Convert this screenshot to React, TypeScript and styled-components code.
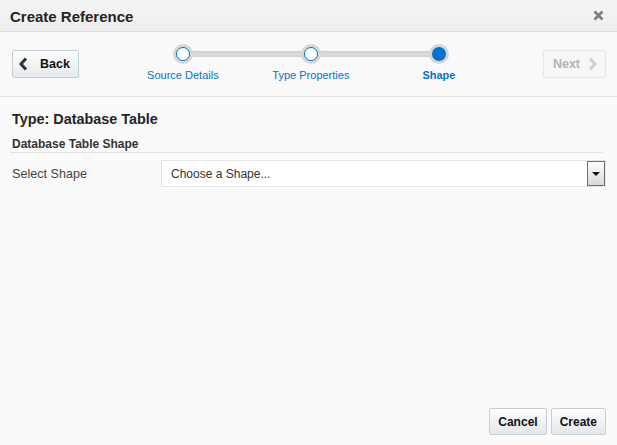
import React from 'react';
import styled, { createGlobalStyle } from 'styled-components';

const GlobalStyle = createGlobalStyle`
  html, body {
    margin: 0;
    padding: 0;
    background: #fafafa;
  }
  body {
    font-family: "Liberation Sans", Arial, sans-serif;
    color: #333;
  }
`;

const Dialog = styled.div`
  width: 617px;
  height: 445px;
  display: flex;
  flex-direction: column;
  background: #fafafa;
  box-sizing: border-box;
`;

const Header = styled.div`
  height: 31px;
  flex: none;
  display: flex;
  align-items: center;
  justify-content: space-between;
  padding: 0 12px 0 10px;
  background: linear-gradient(#f4f4f4, #efefef);
  border-bottom: 1px solid #d6dfe6;
`;

const Title = styled.h1`
  margin: 0;
  font-size: 15px;
  font-weight: bold;
  color: #252525;
  padding-top: 1px;
`;

const CloseButton = styled.button`
  border: none;
  background: none;
  padding: 0;
  width: 14px;
  height: 14px;
  display: flex;
  align-items: center;
  justify-content: center;
  cursor: pointer;
`;

const Train = styled.div`
  height: 64px;
  flex: none;
  display: flex;
  align-items: flex-start;
  padding: 0 11px 0 12px;
  border-bottom: 1px solid #dde3e8;
  background: #f9f9f9;
`;

const NavButton = styled.button<{ $disabled?: boolean }>`
  margin-top: 18px;
  height: 28px;
  display: flex;
  align-items: center;
  gap: ${p => (p.$disabled ? '8px' : '12px')};
  padding: ${p => (p.$disabled ? '0 8px 0 9px' : '0 8px 0 6px')};
  border: 1px solid ${p => (p.$disabled ? '#e3e7ea' : '#c4ced7')};
  border-radius: 2px;
  background: ${p =>
    p.$disabled ? '#f6f7f8' : 'linear-gradient(#fdfdfd, #e6eaec)'};
  font-family: inherit;
  font-size: 12.5px;
  font-weight: bold;
  color: ${p => (p.$disabled ? '#b3b3b3' : '#111')};
  cursor: ${p => (p.$disabled ? 'default' : 'pointer')};
  box-sizing: border-box;
`;

const Stepper = styled.div`
  flex: 1;
  display: flex;
  justify-content: center;
  padding-top: 12px;
`;

const Step = styled.div<{ $first?: boolean; $last?: boolean }>`
  width: 128px;
  display: flex;
  flex-direction: column;
  align-items: center;
  position: relative;

  &::before,
  &::after {
    content: '';
    position: absolute;
    top: 7px;
    height: 6px;
    width: 50%;
    background: linear-gradient(#cfcfcf, #dcdcdc 50%, #d2d2d2);
  }
  &::before {
    left: 0;
    display: ${p => (p.$first ? 'none' : 'block')};
  }
  &::after {
    right: 0;
    display: ${p => (p.$last ? 'none' : 'block')};
  }
`;

const Dot = styled.div<{ $current?: boolean }>`
  position: relative;
  z-index: 1;
  width: 20px;
  height: 20px;
  border-radius: 50%;
  background: #d6d6d6;
  display: flex;
  align-items: center;
  justify-content: center;

  &::after {
    content: '';
    width: ${p => (p.$current ? '14px' : '12px')};
    height: ${p => (p.$current ? '14px' : '12px')};
    border-radius: 50%;
    box-sizing: content-box;
    background: ${p => (p.$current ? '#0572ce' : '#fff')};
    border: ${p => (p.$current ? 'none' : '1.5px solid #0572ce')};
  }
`;

const StepLabel = styled.span<{ $current?: boolean }>`
  margin-top: 5px;
  font-size: 11px;
  line-height: 13px;
  color: #0572ce;
  font-weight: ${p => (p.$current ? 'bold' : 'normal')};
  white-space: nowrap;
`;

const Body = styled.div`
  flex: 1;
  padding: 13px 11px 0 12px;
  display: flex;
  flex-direction: column;
`;

const TypeHeading = styled.h2`
  margin: 0;
  font-size: 14.4px;
  font-weight: bold;
  color: #252525;
  line-height: 18px;
`;

const SectionHeading = styled.h3`
  margin: 9px 3px 0 -2px;
  padding: 0 0 1px 2px;
  font-size: 12px;
  font-weight: bold;
  color: #333;
  line-height: 14px;
  border-bottom: 1px solid #e2e2e2;
`;

const FormRow = styled.div`
  display: flex;
  align-items: center;
  margin-top: 7px;
`;

const FieldLabel = styled.label`
  width: 149px;
  font-size: 12.6px;
  color: #444;
`;

const SelectBox = styled.div`
  flex: 1;
  height: 27px;
  display: flex;
  align-items: center;
  justify-content: space-between;
  border: 1px solid #dfe4e7;
  background: #fff;
  box-sizing: border-box;
  padding: 0 0 0 9px;
  font-size: 12px;
  color: #333;
`;

const ArrowButton = styled.div`
  width: 18px;
  height: 25px;
  box-sizing: border-box;
  border: 1px solid #6e6e6e;
  background: linear-gradient(#ffffff, #d8d8d8);
  display: flex;
  align-items: center;
  justify-content: center;
`;

const Triangle = styled.span`
  width: 0;
  height: 0;
  border-left: 4px solid transparent;
  border-right: 4px solid transparent;
  border-top: 4px solid #111;
`;

const Footer = styled.div`
  flex: none;
  display: flex;
  justify-content: flex-end;
  gap: 4px;
  padding: 0 11px 10px 0;
`;

const FooterButton = styled.button`
  height: 27px;
  margin: 0;
  padding: 0 8px;
  border: 1px solid #c4ced7;
  border-radius: 2px;
  background: linear-gradient(#fdfdfd, #e4e8eb);
  font-family: inherit;
  font-size: 12px;
  font-weight: bold;
  color: #111;
  cursor: pointer;
`;

const Chevron: React.FC<{ dir: 'left' | 'right'; color: string }> = ({ dir, color }) => (
  <svg width="9" height="14" viewBox="0 0 9 14">
    <path
      d={dir === 'left' ? 'M7 1.5 L2 7 L7 12.5' : 'M2 1.5 L7 7 L2 12.5'}
      fill="none"
      stroke={color}
      strokeWidth="3"
    />
  </svg>
);

const steps = [
  { label: 'Source Details' },
  { label: 'Type Properties' },
  { label: 'Shape', current: true },
];

export default function App() {
  return (
    <>
      <GlobalStyle />
      <Dialog>
        <Header>
          <Title>Create Reference</Title>
          <CloseButton aria-label="Close">
            <svg width="11" height="11" viewBox="0 0 11 11">
              <path d="M1.5 1.5 L9.5 9.5 M9.5 1.5 L1.5 9.5" stroke="#7b7b7b" strokeWidth="2.6" />
            </svg>
          </CloseButton>
        </Header>
        <Train>
          <NavButton>
            <Chevron dir="left" color="#333" />
            Back
          </NavButton>
          <Stepper>
            {steps.map((s, i) => (
              <Step key={s.label} $first={i === 0} $last={i === steps.length - 1}>
                <Dot $current={s.current} />
                <StepLabel $current={s.current}>{s.label}</StepLabel>
              </Step>
            ))}
          </Stepper>
          <NavButton $disabled>
            Next
            <Chevron dir="right" color="#d0d0d0" />
          </NavButton>
        </Train>
        <Body>
          <TypeHeading>Type: Database Table</TypeHeading>
          <SectionHeading>Database Table Shape</SectionHeading>
          <FormRow>
            <FieldLabel>Select Shape</FieldLabel>
            <SelectBox>
              Choose a Shape...
              <ArrowButton>
                <Triangle />
              </ArrowButton>
            </SelectBox>
          </FormRow>
        </Body>
        <Footer>
          <FooterButton>Cancel</FooterButton>
          <FooterButton>Create</FooterButton>
        </Footer>
      </Dialog>
    </>
  );
}
